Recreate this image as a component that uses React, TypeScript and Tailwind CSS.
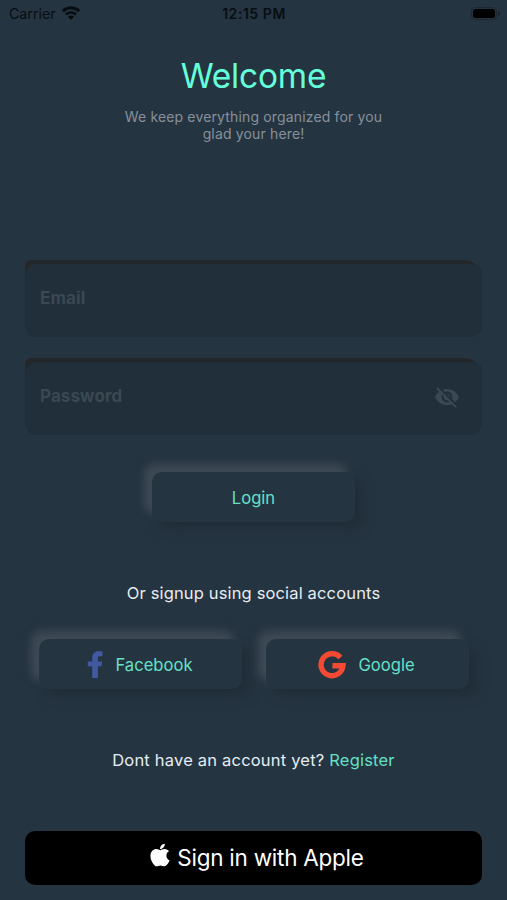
import { MdVisibilityOff } from 'react-icons/md'
import { FaApple } from 'react-icons/fa'
import type { ReactNode } from 'react'

function StatusBar() {
  return (
    <div className="grid h-7 grid-cols-3 items-center pl-[9px] pr-[7px] text-[#080d12]">
      <div className="flex items-center gap-[6px]">
        <span className="text-[14.2px]">Carrier</span>
        <svg viewBox="0 0 18 14" className="-mt-[2px] h-[14px] w-[18px]" fill="none" stroke="currentColor">
          <path d="M.8 5.1a11.6 11.6 0 0 1 16.4 0" strokeWidth="3" />
          <path d="M3.9 8.5a7.4 7.4 0 0 1 10.2 0" strokeWidth="2.6" />
          <path d="M6 10.8a4.1 4.1 0 0 1 6 0L9 14z" fill="currentColor" stroke="none" />
        </svg>
      </div>
      <span className="-ml-px -mt-0.5 text-center text-[14px] font-semibold tracking-[0.55px]">12:15 PM</span>
      <div className="-mt-[2px] flex items-center justify-end gap-px">
        <div className="h-[13px] w-[26px] rounded-[4px] border border-[#1c2731] p-px">
          <div className="h-full w-full rounded-[2.5px] bg-black" />
        </div>
        <div className="h-[5px] w-[2px] rounded-r-full bg-[#1a242d]" />
      </div>
    </div>
  )
}

function Field({ label, icon }: { label: string; icon?: ReactNode }) {
  return (
    <div className="h-[77px] rounded-b-[12px] rounded-tl-[6px] rounded-tr-[18px] bg-gradient-to-b from-[#24272a] from-12% to-[#212f3b] to-25% pl-px pt-[4px]">
      <div className="flex h-full items-center justify-between rounded-b-[12px] rounded-tl-[10px] rounded-tr-[8px] bg-[#212f3b] pl-[14px] pr-[22px] text-[#3a4852]">
        <span className="-mt-[4px] text-[17px] font-bold tracking-[0.1px]">{label}</span>
        {icon}
      </div>
    </div>
  )
}

function SoftButton({ children }: { children: ReactNode }) {
  return (
    <button className="flex h-[50px] w-[203px] items-center justify-center rounded-[10px] bg-[#253441] pt-[2px] text-[16.6px] text-[#64e0c8] shadow-[-8px_-8px_9px_#3e4a55,8px_8px_11px_#202e39]">
      {children}
    </button>
  )
}

export default function App() {
  return (
    <div className="flex h-[900px] w-[507px] flex-col overflow-hidden bg-[#253441] font-['Inter','Liberation_Sans',sans-serif]">
      <StatusBar />

      <header className="mt-[27px] text-center">
        <h1 className="text-[33.5px] leading-[42px] tracking-[-0.2px] text-[#64ffda]">Welcome</h1>
        <p className="mt-[11px] text-[14px] leading-[17px] tracking-[0.15px] text-[#87919b]">
          We keep everything organized for you
          <br />
          glad your here!
        </p>
      </header>

      {/* Credentials */}
      <div className="mt-[118px] flex flex-col gap-[21px] px-[25px]">
        <Field label="Email" />
        <Field label="Password" icon={<MdVisibilityOff className="-mt-[4px] h-[26px] w-[26px]" />} />
      </div>

      <div className="mt-[37px] flex justify-center">
        <SoftButton>Login</SoftButton>
      </div>

      {/* Social accounts */}
      <p className="mt-[59px] text-center text-[16.5px] leading-6 tracking-[0.15px] text-[#e6edf3]">
        Or signup using social accounts
      </p>
      <div className="mt-[34px] flex justify-center gap-6">
        <SoftButton>
          <svg viewBox="0 0 16 28" className="-mt-px mr-3 h-7 w-4" fill="#4059a0">
            <path d="M15.500.5v4.800h-2.600c-1.500 0-2 .8-2 2v3.100h4.200l-.7 4.900h-3.500V27H5.200V15.300H.8v-4.900h4.400V6.600C5.200 2.600 7.800.3 11.500.3c1.600 0 3.200.1 4 .2z" />
          </svg>
          Facebook
        </SoftButton>
        <SoftButton>
          <svg viewBox="0 0 28 28" className="-ml-px -mt-px mr-3 h-7 w-7" fill="none" stroke="#f44a34" strokeWidth="5.4">
            <path d="M22.4 6.5A11 11 0 1 0 25 14.800H14.4" />
          </svg>
          Google
        </SoftButton>
      </div>

      <p className="mt-[59px] text-center text-[16.5px] leading-6 tracking-[0.2px] text-[#e6edf3]">
        Dont have an account yet? <a className="text-[#64e0c8]">Register</a>
      </p>

      <div className="mt-[59px] px-[25px]">
        <button className="flex h-[54px] w-full items-center justify-center gap-[7px] rounded-[10px] bg-black pl-[7px] text-[22.5px] tracking-[-0.25px] text-white">
          <FaApple className="-mt-[6px] h-[26px] w-[20px]" />
          Sign in with Apple
        </button>
      </div>
    </div>
  )
}
